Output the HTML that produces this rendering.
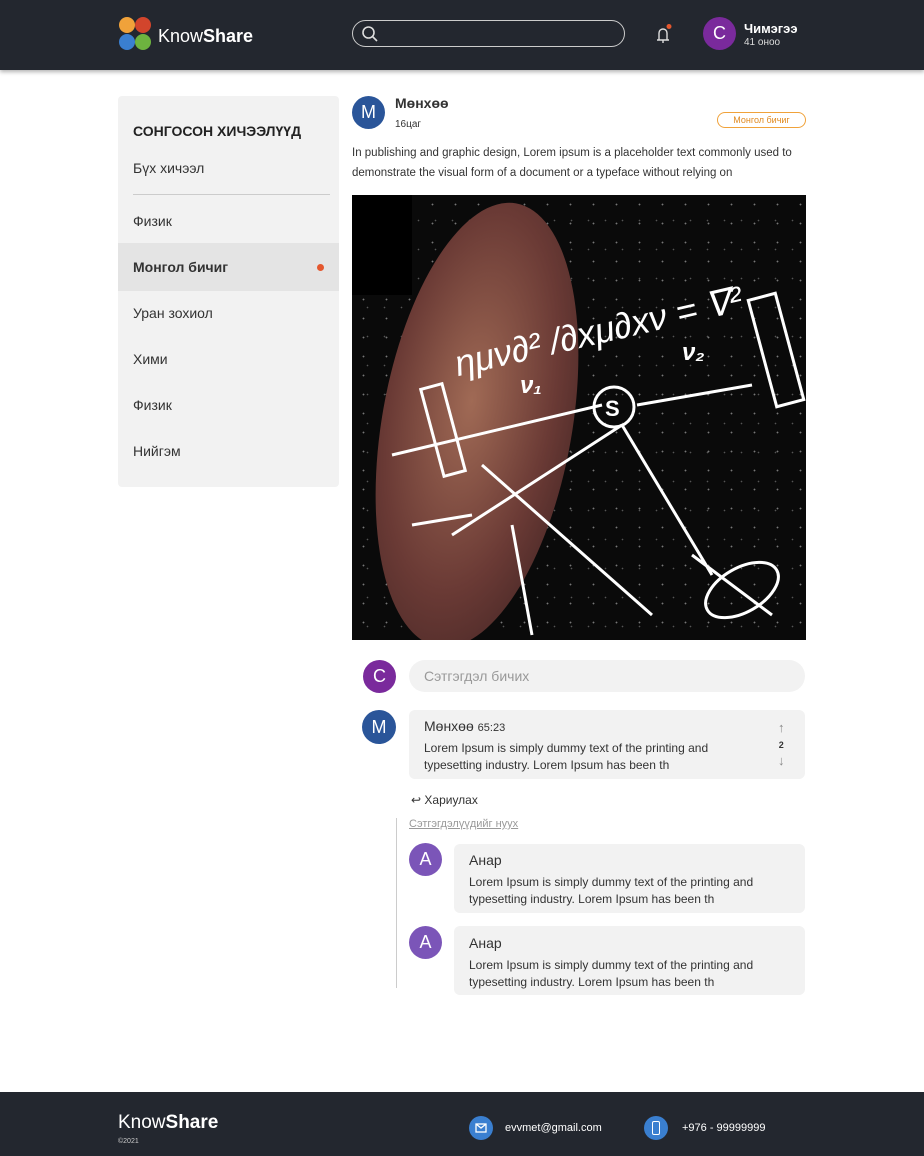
<!DOCTYPE html>
<html><head><meta charset="utf-8"><style>
*{box-sizing:border-box;margin:0;padding:0}
body{width:924px;height:1156px;position:relative;background:#fff;font-family:"Liberation Sans",sans-serif;color:#222;overflow:hidden}
.a{position:absolute}
.hdr{left:0;top:0;width:924px;height:70px;background:#23272f;box-shadow:0 2px 4px rgba(0,0,0,.3)}
.av{border-radius:50%;color:#fff;display:flex;align-items:center;justify-content:center;font-size:18px}
.side{left:118px;top:96px;width:221px;height:391px;background:#f2f2f2;border-radius:4px}
.it{left:15px;font-size:14px;color:#333}
.box{background:#f2f2f2;border-radius:6px}
.ft{left:0;top:1092px;width:924px;height:64px;background:#23272f}
.stars{background-color:#0a0a0a;background-image:radial-gradient(circle,#777 0.7px,transparent 1.1px),radial-gradient(circle,#555 0.6px,transparent 1px);background-size:23px 19px,17px 29px;background-position:0 0,7px 11px}
</style></head><body>
<div class="a hdr">
  <svg class="a" style="left:118px;top:16px" width="34" height="36" viewBox="0 0 34 36">
    <circle cx="9" cy="9" r="8" fill="#f0a23a"/><circle cx="25" cy="9" r="8" fill="#d2452c"/>
    <circle cx="9" cy="26" r="8" fill="#3a7fd0"/><circle cx="25" cy="26" r="8" fill="#6db33f"/>
  </svg>
  <div class="a" style="left:158px;top:26px;color:#fff;font-size:18px">Know<b>Share</b></div>
  <div class="a" style="left:352px;top:20px;width:273px;height:27px;border:1.5px solid #ccc;border-radius:14px"></div>
  <svg class="a" style="left:361px;top:25px" width="18" height="18" viewBox="0 0 18 18" fill="none" stroke="#ddd" stroke-width="1.6"><circle cx="7.5" cy="7.5" r="5.5"/><path d="M11.5 11.5L16 16"/></svg>
  <svg class="a" style="left:653px;top:23px" width="22" height="22" viewBox="0 0 22 22" fill="none" stroke="#ddd" stroke-width="1.4"><path d="M4 17h12M6 17V10a4 4 0 0 1 8 0v7M10 17v3"/><circle cx="16" cy="3.5" r="2.5" fill="#e4572e" stroke="none"/></svg>
  <div class="a av" style="left:703px;top:17px;width:33px;height:33px;background:#7a2a9c">C</div>
  <div class="a" style="left:744px;top:21px;color:#fff;font-size:13px;font-weight:bold">Чимэгээ</div>
  <div class="a" style="left:744px;top:37px;color:#ddd;font-size:10px">41 оноо</div>
</div>
<div class="a side">
  <div class="a" style="left:15px;top:27px;font-size:14px;font-weight:bold;color:#222">СОНГОСОН ХИЧЭЭЛҮҮД</div>
  <div class="a it" style="top:64px">Бүх хичээл</div>
  <div class="a" style="left:15px;top:98px;width:197px;height:1px;background:#ccc"></div>
  <div class="a it" style="top:117px">Физик</div>
  <div class="a" style="left:0;top:147px;width:221px;height:48px;background:#e4e4e4"></div>
  <div class="a it" style="top:163px;font-weight:bold">Монгол бичиг</div>
  <div class="a" style="left:199px;top:168px;width:7px;height:7px;border-radius:50%;background:#e4572e"></div>
  <div class="a it" style="top:209px">Уран зохиол</div>
  <div class="a it" style="top:255px">Хими</div>
  <div class="a it" style="top:301px">Физик</div>
  <div class="a it" style="top:347px">Нийгэм</div>
</div>
<div class="a av" style="left:352px;top:96px;width:33px;height:33px;background:#2a5599">M</div>
<div class="a" style="left:395px;top:95px;font-size:14px;font-weight:bold;color:#333">Мөнхөө</div>
<div class="a" style="left:395px;top:119px;font-size:10px;color:#333">16цаг</div>
<div class="a" style="left:717px;top:112px;width:89px;height:16px;border:1px solid #f0a23a;border-radius:8px;font-size:9px;color:#e08a20;text-align:center;line-height:14px">Монгол бичиг</div>
<div class="a" style="left:352px;top:143px;width:460px;font-size:11.5px;line-height:20px;color:#333">In publishing and graphic design, Lorem ipsum is a placeholder text commonly used to demonstrate the visual form of a document or a typeface without relying on</div>
<div class="a stars" style="left:352px;top:195px;width:454px;height:445px;overflow:hidden">
  <div class="a" style="left:0;top:0;width:60px;height:100px;background:#000"></div>
  <div class="a" style="left:30px;top:5px;width:190px;height:450px;border-radius:50%;background:radial-gradient(ellipse at 45% 45%,#a06a55,#6a3a35 55%,#3a2020);transform:rotate(10deg)"></div>
  <svg class="a" style="left:0;top:0" width="454" height="445" fill="none" stroke="#fff" stroke-width="3">
    <circle cx="262" cy="212" r="20"/><path d="M40 260L250 210M285 210L400 190M100 340L270 230M270 230L360 380M130 270L300 420M340 360L420 420M60 330L120 320M160 330L180 440"/>
    <rect x="410" y="100" width="28" height="110" transform="rotate(-15 424 155)"/><rect x="80" y="190" width="22" height="90" transform="rotate(-15 91 235)"/>
    <ellipse cx="390" cy="395" rx="40" ry="22" transform="rotate(-30 390 395)"/>
    <text x="100" y="150" fill="#fff" stroke="none" font-size="36" font-style="italic" transform="rotate(-13 240 140)">ημν∂² /∂xμ∂xν = ∇²</text>
    <text x="253" y="221" fill="#fff" stroke="none" font-size="22" font-weight="bold">S</text>
    <text x="168" y="198" fill="#fff" stroke="none" font-size="24" font-style="italic" font-weight="bold">ν₁</text>
    <text x="330" y="165" fill="#fff" stroke="none" font-size="24" font-style="italic" font-weight="bold">ν₂</text>
  </svg>
</div>
<div class="a av" style="left:363px;top:660px;width:33px;height:33px;background:#7a2a9c">C</div>
<div class="a" style="left:409px;top:660px;width:396px;height:32px;background:#f2f2f2;border-radius:16px;font-size:14px;color:#999;padding:8px 15px">Сэтгэгдэл бичих</div>
<div class="a av" style="left:362px;top:710px;width:34px;height:34px;background:#2a5599">M</div>
<div class="a box" style="left:409px;top:710px;width:396px;height:69px"></div>
<div class="a" style="left:424px;top:718px;font-size:14px;color:#333">Мөнхөө <span style="font-size:11px">65:23</span></div>
<div class="a" style="left:424px;top:740px;width:330px;font-size:12px;line-height:17px;color:#333">Lorem Ipsum is simply dummy text of the printing and typesetting industry. Lorem Ipsum has been th</div>
<div class="a" style="left:778px;top:720px;font-size:13px;color:#888;text-align:center;line-height:16px;font-weight:bold">↑<br><span style="font-size:9px;color:#333">2</span><br>↓</div>
<div class="a" style="left:411px;top:793px;font-size:12px;color:#333">↩ Хариулах</div>
<div class="a" style="left:409px;top:818px;font-size:11px;color:#999;text-decoration:underline">Сэтгэгдэлүүдийг нуух</div>
<div class="a" style="left:396px;top:818px;width:1px;height:170px;background:#ccc"></div>
<div class="a av" style="left:409px;top:843px;width:33px;height:33px;background:#7b55b8">A</div>
<div class="a box" style="left:454px;top:844px;width:351px;height:69px"></div>
<div class="a" style="left:469px;top:852px;font-size:14px;color:#333">Анар</div>
<div class="a" style="left:469px;top:874px;width:330px;font-size:12px;line-height:17px;color:#333">Lorem Ipsum is simply dummy text of the printing and typesetting industry. Lorem Ipsum has been th</div>
<div class="a av" style="left:409px;top:926px;width:33px;height:33px;background:#7b55b8">A</div>
<div class="a box" style="left:454px;top:926px;width:351px;height:69px"></div>
<div class="a" style="left:469px;top:935px;font-size:14px;color:#333">Анар</div>
<div class="a" style="left:469px;top:957px;width:330px;font-size:12px;line-height:17px;color:#333">Lorem Ipsum is simply dummy text of the printing and typesetting industry. Lorem Ipsum has been th</div>
<div class="a ft">
  <div class="a" style="left:118px;top:20px;color:#fff;font-size:19px">Know<b>Share</b></div>
  <div class="a" style="left:118px;top:46px;color:#ccc;font-size:7px">©2021</div>
  <div class="a" style="left:469px;top:24px;width:24px;height:24px;border-radius:50%;background:#3a7fd0"></div>
  <svg class="a" style="left:475px;top:31px" width="12" height="10" fill="none" stroke="#fff" stroke-width="1.3"><rect x="1" y="1" width="10" height="8"/><path d="M1 1l5 4 5-4"/></svg>
  <div class="a" style="left:505px;top:30px;color:#fff;font-size:11px">evvmet@gmail.com</div>
  <div class="a" style="left:644px;top:24px;width:24px;height:24px;border-radius:50%;background:#3a7fd0"></div>
  <div class="a" style="left:652px;top:29px;width:8px;height:14px;border:1.3px solid #fff;border-radius:2px"></div>
  <div class="a" style="left:682px;top:30px;color:#fff;font-size:11px">+976 - 99999999</div>
</div>
</body></html>
